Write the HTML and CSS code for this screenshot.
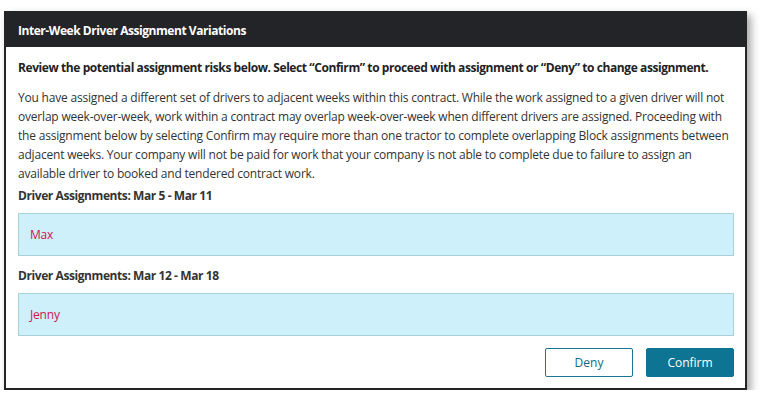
FILE: index.html
```html
<!DOCTYPE html>
<html lang="en">
<head>
    <meta charset="UTF-8">
    <meta name="viewport" content="width=device-width, initial-scale=1.0">
    <title>Inter-Week Driver Assignment Variations</title>
    <link rel="stylesheet" href="styles.css">
</head>
<body>
    <div class="modal">
        <div class="modal-header">Inter-Week Driver Assignment Variations</div>
        <div class="modal-body">
            <p class="lead">Review the potential assignment risks below. Select &ldquo;Confirm&rdquo; to proceed with assignment or &ldquo;Deny&rdquo; to change assignment.</p>
            <p class="message">You have assigned a different set of drivers to adjacent weeks within this contract. While the work assigned to a given driver will not<br>
                overlap week-over-week, work within a contract may overlap week-over-week when different drivers are assigned. Proceeding with<br>
                the assignment below by selecting Confirm may require more than one tractor to complete overlapping Block assignments between<br>
                adjacent weeks. Your company will not be paid for work that your company is not able to complete due to failure to assign an<br>
                available driver to booked and tendered contract work.</p>

            <div class="week-label first">Driver Assignments: Mar 5 - Mar 11</div>
            <div class="driver-box">Max</div>

            <div class="week-label">Driver Assignments: Mar 12 - Mar 18</div>
            <div class="driver-box">Jenny</div>

            <div class="actions">
                <button class="btn btn-deny">Deny</button>
                <button class="btn btn-confirm">Confirm</button>
            </div>
        </div>
    </div>
</body>
</html>
```

FILE: styles.css
```css
body {
    font-family: "Open Sans", Arial, sans-serif;
    background-color: #ffffff;
    margin: 0;
    padding: 11px 0 0 4px;
}
.modal {
    width: 739px;
    border: 2px solid #242424;
    background-color: #ffffff;
    box-shadow: 4px 4px 8px rgba(0, 0, 0, 0.35);
}
.modal-header {
    background-color: #232428;
    color: #ffffff;
    font-size: 12px;
    font-weight: bold;
    letter-spacing: -0.45px;
    height: 34px;
    line-height: 36px;
    padding: 0 12px;
}
.modal-body {
    padding: 11px 11px 11px 12px;
    color: #333333;
    font-size: 12px;
    line-height: 19px;
    letter-spacing: -0.2px;
}
p {
    margin: 0;
}
.lead {
    font-weight: bold;
    color: #222222;
    letter-spacing: -0.42px;
}
.message {
    margin-top: 11px;
    white-space: nowrap;
}
.week-label {
    font-weight: bold;
    letter-spacing: -0.42px;
    margin-top: 10px;
}
.week-label.first {
    margin-top: 3px;
}
.driver-box {
    background-color: #cdf0fa;
    border: 1px solid #a9d1dc;
    color: #d3124e;
    height: 41px;
    line-height: 41px;
    padding: 0 11px;
    margin-top: 8px;
}
.actions {
    display: flex;
    justify-content: flex-end;
    gap: 13px;
    margin-top: 12px;
}
.btn {
    width: 88px;
    height: 29px;
    border-radius: 2px;
    font-family: "Open Sans", Arial, sans-serif;
    font-size: 12px;
    cursor: pointer;
}
.btn-deny {
    background-color: #ffffff;
    color: #0f6a88;
    border: 1px solid #1b7595;
}
.btn-confirm {
    background-color: #0e7493;
    color: #ffffff;
    border: 1px solid #0e7493;
}
```
